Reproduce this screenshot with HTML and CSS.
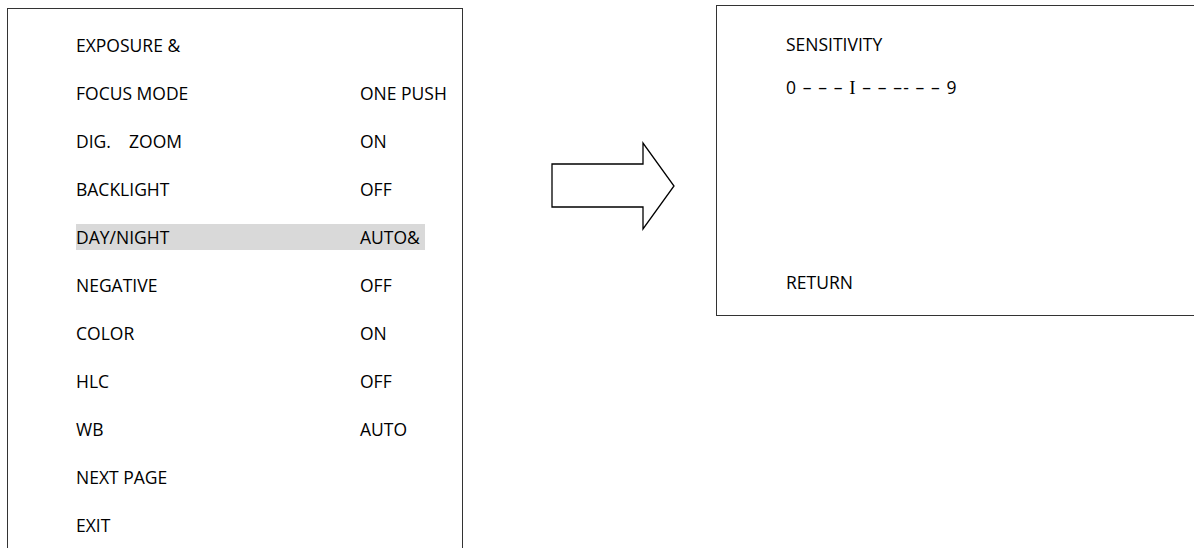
FILE: index.html
```html
<!DOCTYPE html>
<html lang="en">
<head>
    <meta charset="UTF-8">
    <title>Camera OSD Menu</title>
    <meta name="viewport" content="width=device-width, initial-scale=1.0">
    <link rel="stylesheet" href="styles.css">
</head>
<body>

    <div class="page">
        <div class="menu">
            <div class="row"><span class="name">EXPOSURE &amp;</span><span class="value"></span></div>
            <div class="row"><span class="name">FOCUS MODE</span><span class="value">ONE PUSH</span></div>
            <div class="row"><span class="name">DIG.&nbsp;&nbsp;&nbsp;&nbsp;ZOOM</span><span class="value">ON</span></div>
            <div class="row"><span class="name">BACKLIGHT</span><span class="value">OFF</span></div>
            <div class="row selected"><span class="name">DAY/NIGHT</span><span class="value">AUTO&amp;</span></div>
            <div class="row"><span class="name">NEGATIVE</span><span class="value">OFF</span></div>
            <div class="row"><span class="name">COLOR</span><span class="value">ON</span></div>
            <div class="row"><span class="name">HLC</span><span class="value">OFF</span></div>
            <div class="row"><span class="name">WB</span><span class="value">AUTO</span></div>
            <div class="row"><span class="name">NEXT PAGE</span><span class="value"></span></div>
            <div class="row"><span class="name">EXIT</span><span class="value"></span></div>
        </div>

        <svg class="arrow" width="126" height="90" viewBox="0 0 126 90">
            <polygon points="2,23 93,23 93,2 124,45 93,88 93,66 2,66" fill="#fff" stroke="#000" stroke-width="1.3" stroke-linejoin="miter"/>
        </svg>

        <div class="submenu">
            <div class="sub-row">SENSITIVITY</div>
            <div class="sub-row scale">0 – – – <span class="mark">I</span> – – –- – – 9</div>
            <div class="sub-row return">RETURN</div>
        </div>
    </div>

</body>
</html>
```

FILE: styles.css
```css
body {
    font-family: "Open Sans", "Liberation Sans", sans-serif;
    font-size: 17.5px;
    margin: 0;
    padding: 0;
    background: #ffffff;
    color: #000;
    overflow: hidden;
}
.page {
    display: flex;
    align-items: flex-start;
    width: 1194px;
    height: 548px;
    overflow: hidden;
}
.menu {
    box-sizing: border-box;
    flex-shrink: 0;
    width: 456px;
    height: 540px;
    margin: 8px 0 0 7px;
    padding: 23px 0 0 68px;
    border: 1px solid #333;
    border-bottom: 0;
    display: flex;
    flex-direction: column;
    gap: 22px;
}
.row {
    display: flex;
    flex-shrink: 0;
    width: 349px;
    height: 26px;
    line-height: 26px;
    white-space: pre;
}
.row .name {
    flex-shrink: 0;
    width: 284px;
}
.row .value {
    flex-shrink: 0;
}
.row.selected {
    background-color: #d9d9d9;
}
.arrow {
    margin: 141px 0 0 87px;
    flex-shrink: 0;
}
.submenu {
    box-sizing: border-box;
    flex-shrink: 0;
    width: 560px;
    height: 311px;
    margin: 5px 0 0 40px;
    padding: 25px 0 0 69px;
    border: 1px solid #333;
    display: flex;
    flex-direction: column;
    gap: 17px;
}
.sub-row {
    height: 26px;
    line-height: 26px;
    white-space: pre;
}
.scale {
    letter-spacing: 1.1px;
}
.scale .mark {
    font-family: "Liberation Serif", serif;
    font-size: 19px;
}
.return {
    margin-top: auto;
    margin-bottom: 20px;
}
```
